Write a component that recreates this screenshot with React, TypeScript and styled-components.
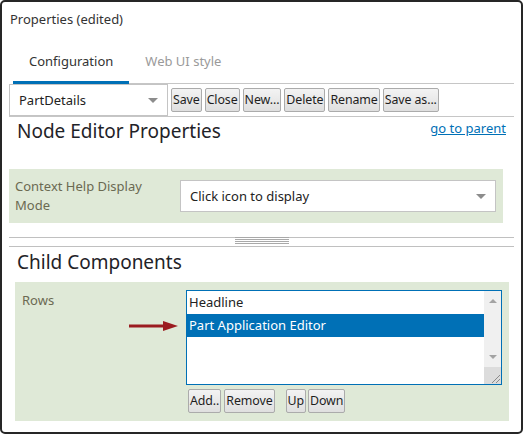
import React from "react";
import styled, { createGlobalStyle } from "styled-components";

const Global = createGlobalStyle`
  html, body { margin: 0; padding: 0; background: #fff; }
  body { font-family: "Noto Sans", "DejaVu Sans", sans-serif; font-size: 13px; color: #333; }
  * { box-sizing: border-box; }
`;

const BLUE = "#0070b6";

const Frame = styled.div`
  width: 523px;
  height: 434px;
  border: 2px solid #262626;
  border-radius: 5px;
  background: #fff;
  display: flex;
  flex-direction: column;
`;

const TitleBar = styled.div`
  height: 34px;
  line-height: 34px;
  padding-left: 8px;
  font-size: 13px;
  color: #333;
`;

const Content = styled.div`
  padding: 0 7px;
  display: flex;
  flex-direction: column;
`;

const TabStrip = styled.div`
  display: flex;
  margin-left: 4px;
  border-bottom: 1px solid #c6c6c6;
`;

const Tab = styled.div<{ $active?: boolean }>`
  height: 48px;
  padding: 5px 16px 0;
  display: flex;
  align-items: center;
  margin-bottom: -1px;
  border-bottom: 3px solid ${(p) => (p.$active ? BLUE : "transparent")};
  color: ${(p) => (p.$active ? "#333" : "#9a9a9a")};
  font-size: 13px;
`;

const Toolbar = styled.div`
  display: flex;
  align-items: center;
  height: 33px;
  border-bottom: 1px solid #c6c6c6;
`;

const SelectBox = styled.div<{ $width?: number }>`
  ${(p) => (p.$width ? `width: ${p.$width}px;` : "flex: 1;")}
  height: 32px;
  border: 1px solid #c4c4c4;
  background: #fff;
  display: flex;
  align-items: center;
  justify-content: space-between;
  padding: 0 9px 0 9px;
  font-size: 13px;
  color: #222;
`;

const Caret = styled.span`
  width: 0;
  height: 0;
  border-left: 5px solid transparent;
  border-right: 5px solid transparent;
  border-top: 5px solid #8c8c8c;
`;

const Button = styled.button<{ $ml?: number }>`
  height: 24px;
  margin-left: ${(p) => p.$ml ?? 3}px;
  padding: 0 1px;
  border: 1px solid #ababab;
  border-radius: 2px;
  background: linear-gradient(#f3f3f3, #dfdfdf);
  font-family: "Noto Sans", "DejaVu Sans", sans-serif;
  font-size: 12.4px;
  letter-spacing: -0.1px;
  color: #1e1e1e;
  line-height: 20px;
  cursor: pointer;
`;

const SectionHeader = styled.div`
  height: 52px;
  display: flex;
  justify-content: space-between;
  align-items: flex-start;
  padding: 0 8px;
`;

const Heading = styled.h2<{ $mt?: number }>`
  margin: ${(p) => p.$mt ?? 1}px 0 0;
  font-size: 19px;
  font-weight: 400;
  line-height: 26px;
  color: #1f2328;
`;

const ParentLink = styled.a`
  margin-top: 2px;
  line-height: 18px;
  font-size: 13px;
  color: ${BLUE};
  text-decoration: underline;
`;

const FieldPanel = styled.div`
  margin-right: 11px;
  height: 54px;
  background: #dfe9d7;
  padding: 0 7px 0 6px;
  display: flex;
  align-items: center;
`;

const FieldLabel = styled.div<{ $width: number }>`
  width: ${(p) => p.$width}px;
  flex: none;
  line-height: 19px;
  font-size: 13px;
  color: #6b6a52;
`;

const Spacer = styled.div<{ $w: number }>`
  width: ${(p) => p.$w}px;
  flex: none;
`;

const Splitter = styled.div`
  margin-top: 14px;
  height: 10px;
  border-top: 1px solid #c0c0c0;
  border-bottom: 1px solid #c0c0c0;
  display: flex;
  justify-content: center;
`;

const Grip = styled.div`
  margin-top: -1px;
  width: 54px;
  height: 7px;
  background: repeating-linear-gradient(#a9a9a9 0 1px, transparent 1px 2px);
`;

const ChildHeader = styled.div`
  padding: 0 8px;
  height: 35px;
`;

const ChildPanel = styled.div`
  position: relative;
  margin: 0 5px 0 6px;
  height: 139px;
  background: #dfe9d7;
  padding: 8px 7px 0 0;
  display: flex;
`;

const LeftCol = styled.div`
  width: 171px;
  flex: none;
  padding-left: 7px;
`;

const RowsLabel = styled(FieldLabel)`
  line-height: 20px;
`;

const RightCol = styled.div`
  flex: 1;
  display: flex;
  flex-direction: column;
`;

const ListBox = styled.div`
  height: 95px;
  border: 1px solid ${BLUE};
  background: #fff;
  display: flex;
`;

const Items = styled.div`
  flex: 1;
  display: flex;
  flex-direction: column;
`;

const Item = styled.div<{ $selected?: boolean }>`
  height: 23px;
  line-height: 23px;
  padding-left: 2px;
  font-size: 13px;
  background: ${(p) => (p.$selected ? BLUE : "transparent")};
  color: ${(p) => (p.$selected ? "#fff" : "#222")};
`;

const ScrollBar = styled.div`
  width: 17px;
  flex: none;
  background: #f0f0f0;
  display: flex;
  flex-direction: column;
  align-items: center;
`;

const ScrollArrow = styled.span<{ $down?: boolean }>`
  width: 0;
  height: 0;
  border-left: 4px solid transparent;
  border-right: 4px solid transparent;
  ${(p) =>
    p.$down
      ? "border-top: 4px solid #a3a3a3; margin-top: auto; margin-bottom: 8px;"
      : "border-bottom: 4px solid #a3a3a3; margin-top: 8px;"}
`;

const Corner = styled.div`
  width: 17px;
  height: 17px;
  background: #dcdcdc;
  display: flex;
  align-items: flex-end;
  justify-content: flex-end;
`;

const ButtonRow = styled.div`
  display: flex;
  margin-top: 4px;
`;

const Arrow = styled.svg`
  position: absolute;
  left: 114px;
  top: 39px;
`;

export default function App() {
  return (
    <>
      <Global />
      <Frame>
        <TitleBar>Properties (edited)</TitleBar>
        <Content>
          <TabStrip>
            <Tab $active>Configuration</Tab>
            <Tab>Web UI style</Tab>
          </TabStrip>
          <Toolbar>
            <SelectBox $width={159}>
              PartDetails
              <Caret />
            </SelectBox>
            <Button>Save</Button>
            <Button>Close</Button>
            <Button>New...</Button>
            <Button>Delete</Button>
            <Button>Rename</Button>
            <Button>Save as...</Button>
          </Toolbar>
          <SectionHeader>
            <Heading>Node Editor Properties</Heading>
            <ParentLink href="#">go to parent</ParentLink>
          </SectionHeader>
          <FieldPanel>
            <FieldLabel $width={150}>Context Help Display Mode</FieldLabel>
            <Spacer $w={15} />
            <SelectBox>
              Click icon to display
              <Caret />
            </SelectBox>
          </FieldPanel>
          <Splitter>
            <Grip />
          </Splitter>
          <ChildHeader>
            <Heading $mt={2}>Child Components</Heading>
          </ChildHeader>
          <ChildPanel>
            <LeftCol>
              <RowsLabel $width={100}>Rows</RowsLabel>
            </LeftCol>
            <Arrow width="50" height="12" viewBox="0 0 50 12">
              <line x1="0" y1="5" x2="38" y2="5" stroke="#9b1c20" strokeWidth="3" strokeLinecap="round" />
              <polygon points="34,0 49,5 34,10" fill="#9b1c20" />
            </Arrow>
            <RightCol>
              <ListBox>
                <Items>
                  <Item>Headline</Item>
                  <Item $selected>Part Application Editor</Item>
                </Items>
                <ScrollBar>
                  <ScrollArrow />
                  <ScrollArrow $down />
                  <Corner>
                    <svg width="12" height="12" viewBox="0 0 12 12">
                      <line x1="11" y1="3" x2="3" y2="11" stroke="#8a8a8a" strokeWidth="1" />
                      <line x1="11" y1="7" x2="7" y2="11" stroke="#8a8a8a" strokeWidth="1" />
                    </svg>
                  </Corner>
                </ScrollBar>
              </ListBox>
              <ButtonRow>
                <Button $ml={2}>Add..</Button>
                <Button $ml={3}>Remove</Button>
                <Button $ml={11}>Up</Button>
                <Button $ml={2}>Down</Button>
              </ButtonRow>
            </RightCol>
          </ChildPanel>
        </Content>
      </Frame>
    </>
  );
}
